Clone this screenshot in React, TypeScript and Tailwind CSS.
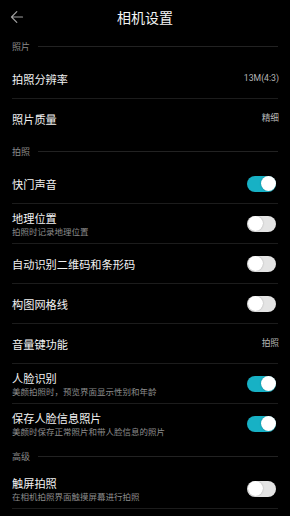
import React from "react";

const font = { fontFamily: '"Noto Sans CJK SC", "Noto Sans", sans-serif' };

function Toggle({ on }: { on: boolean }) {
  return (
    <div
      className={`relative w-[29px] h-[16px] rounded-full ${on ? "bg-[#17b1c5]" : "bg-[#e4e4e4]"}`}
    >
      <div
        className={`absolute top-[0.5px] w-[15px] h-[15px] rounded-full bg-white shadow-[0_0_1.5px_rgba(0,0,0,0.35)] ${on ? "right-[0.5px]" : "left-[0.5px]"}`}
      />
    </div>
  );
}

function Section({ title }: { title: string }) {
  return (
    <div className="h-[25px] flex items-center pl-[12px] pr-[12px]">
      <span className="text-[9px] leading-[12px] text-[#8a8a8a] mr-[8px]">{title}</span>
      <div className="flex-1 h-px bg-[#222222]" />
    </div>
  );
}

type RowProps = {
  title: string;
  sub?: string;
  value?: string;
  toggle?: boolean;
  divider?: boolean;
};

function Row({ title, sub, value, toggle, divider = true }: RowProps) {
  return (
    <div className="mx-[12px] h-[40px] flex flex-col">
      <div className="flex-1 flex items-center">
        <div className="flex-1 flex flex-col min-w-0">
          <span className="text-[11.2px] leading-[14px] text-[#f2f2f2] whitespace-nowrap">{title}</span>
          {sub && (
            <span className="text-[8.5px] leading-[12px] text-[#8c8c8c] whitespace-nowrap">{sub}</span>
          )}
        </div>
        {value !== undefined && (
          <span
            className="text-[8.7px] text-[#b5b5b5] mr-[-1px]"
            style={{ fontFamily: 'Roboto, "Noto Sans CJK SC", sans-serif' }}
          >
            {value}
          </span>
        )}
        {toggle !== undefined && (
          <div className="mr-[2px]">
            <Toggle on={toggle} />
          </div>
        )}
      </div>
      <div className={`h-px ${divider ? "bg-[#1c1c1c]" : "bg-transparent"}`} />
    </div>
  );
}

export default function App() {
  return (
    <div className="w-[290px] h-[516px] bg-black overflow-hidden" style={font}>
      <div className="relative h-[34px] flex items-center justify-center">
        <svg
          className="absolute left-[10px] top-[10px]"
          width="14"
          height="14"
          viewBox="0 0 14 14"
          fill="none"
          stroke="#a0a0a0"
          strokeWidth="1.2"
          strokeLinecap="round"
          strokeLinejoin="round"
        >
          <path d="M12.5 7H1.5M6.8 1.7L1.5 7l5.3 5.3" />
        </svg>
        <span className="text-[14px] leading-[18px] text-[#f4f4f4]">相机设置</span>
      </div>
      <Section title="照片" />
      <Row title="拍照分辨率" value="13M(4:3)" />
      <Row title="照片质量" value="精细" divider={false} />
      <Section title="拍照" />
      <Row title="快门声音" toggle={true} />
      <Row title="地理位置" sub="拍照时记录地理位置" toggle={false} />
      <Row title="自动识别二维码和条形码" toggle={false} />
      <Row title="构图网格线" toggle={false} />
      <Row title="音量键功能" value="拍照" />
      <Row title="人脸识别" sub="美颜拍照时，预览界面显示性别和年龄" toggle={true} />
      <Row title="保存人脸信息照片" sub="美颜时保存正常照片和带人脸信息的照片" toggle={true} divider={false} />
      <Section title="高级" />
      <Row title="触屏拍照" sub="在相机拍照界面触摸屏幕进行拍照" toggle={false} />
    </div>
  );
}
